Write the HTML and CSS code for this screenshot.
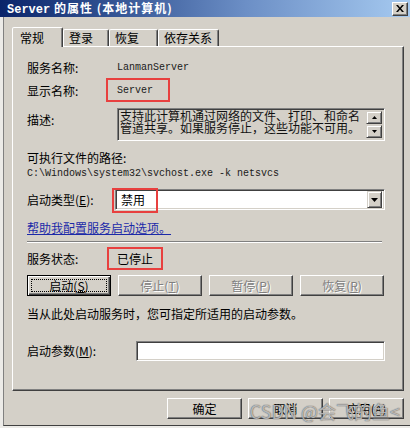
FILE: index.html
```html
<!DOCTYPE html>
<html>
<head>
<meta charset="utf-8">
<title>Server 的属性</title>
<link rel="stylesheet" href="styles.css">
</head>
<body>
<div class="window">
  <div class="titlebar">
    <span class="title"><span class="tmono">Server</span> 的属性 (本地计算机)</span>
    <span class="close"><svg width="8" height="7" viewBox="0 0 8 7"><path d="M0 0h2l2 2.5L6 0h2L5 3.5 8 7H6L4 4.5 2 7H0l3-3.5z" fill="#000"/></svg></span>
  </div>
  <div class="frame">
    <div class="tabs">
      <div class="tab active">常规</div>
      <div class="tab t2">登录</div>
      <div class="tab t3">恢复</div>
      <div class="tab t4">依存关系</div>
    </div>
    <div class="panel">
      <div class="row r-name"><span class="label">服务名称:</span><span class="val mono">LanmanServer</span></div>
      <div class="row r-disp"><span class="label">显示名称:</span><span class="val mono">Server<i class="mark mark-disp"></i></span></div>
      <div class="r-desc">
        <span class="label label-top">描述:</span>
        <div class="desc">
          <div class="desc-text">支持此计算机通过网络的文件、打印、和命名<br>管道共享。如果服务停止，这些功能不可用。</div>
          <div class="vscroll">
            <span class="sbtn"><svg width="5" height="3" viewBox="0 0 5 3"><path d="M2.5 0L5 3H0z" fill="#000"/></svg></span>
            <span class="sbtn"><svg width="5" height="3" viewBox="0 0 5 3"><path d="M0 0h5L2.5 3z" fill="#000"/></svg></span>
          </div>
        </div>
      </div>
      <div class="r-pathlabel">可执行文件的路径:</div>
      <div class="r-path mono">C:\Windows\system32\svchost.exe -k netsvcs</div>
      <div class="row r-type">
        <span class="label label-type">启动类型(<u>E</u>):</span>
        <div class="combo">
          <span class="combo-text">禁用</span>
          <span class="combo-btn"><svg width="7" height="4" viewBox="0 0 7 4"><path d="M0 0h7L3.5 4z" fill="#000"/></svg></span>
          <i class="mark mark-type"></i>
        </div>
      </div>
      <div class="r-link"><span class="link">帮助我配置服务启动选项。</span></div>
      <div class="sep"></div>
      <div class="row r-status"><span class="label">服务状态:</span><span class="val status">已停止<i class="mark mark-status"></i></span></div>
      <div class="btnrow">
        <span class="btn default"><span class="focus">启动(<u>S</u>)</span></span>
        <span class="btn disabled">停止(<u>T</u>)</span>
        <span class="btn disabled">暂停(<u>P</u>)</span>
        <span class="btn disabled">恢复(<u>R</u>)</span>
      </div>
      <div class="hint">当从此处启动服务时，您可指定所适用的启动参数。</div>
      <div class="row r-param"><span class="label label-param">启动参数(<u>M</u>):</span><div class="input"></div></div>
    </div>
    <div class="footer">
      <span class="btn fbtn">确定</span>
      <span class="btn fbtn">取消</span>
      <span class="btn fbtn">应用(<u>A</u>)</span>
    </div>
  </div>
  <div class="watermark">CSDN @会飞的鱼&lt;</div>
</div>
</body>
</html>
```

FILE: styles.css
```css
* { box-sizing: border-box; }
html, body { margin: 0; padding: 0; }
body {
  width: 410px;
  height: 428px;
  overflow: hidden;
  background: #ffffff;
  font-family: "Noto Sans CJK SC", "Noto Sans", sans-serif;
  font-size: 12px;
  color: #000;
}
.window {
  position: relative;
  width: 410px;
  height: 428px;
  background: #ecebe8;
}
.titlebar {
  height: 17px;
  display: flex;
  align-items: center;
  justify-content: space-between;
  padding: 0 2px 0 7px;
  background: linear-gradient(to right, #0a246a 0%, #2f4f8f 25%, #6c8fc6 60%, #a6caf0 100%);
}
.title {
  color: #fff;
  font-weight: bold;
  font-size: 12px;
  line-height: 17px;
  letter-spacing: 1px;
  white-space: nowrap;
}
.tmono { font-family: "Liberation Mono", monospace; font-size: 12px; letter-spacing: 0; }
.close {
  width: 16px;
  height: 14px;
  background: #d4d0c8;
  border: 1px solid;
  border-color: #fff #404040 #404040 #fff;
  box-shadow: inset -1px -1px #808080;
  display: flex;
  align-items: center;
  justify-content: center;
}
.frame {
  position: relative;
  margin-left: 3px;
  height: 409px;
  border-left: 1px solid #808080;
  border-bottom: 1px solid #404040;
  background: #d4d0c8;
  padding: 10px 6px 0 8px;
}
.tabs {
  position: relative;
  z-index: 1;
  display: flex;
  align-items: flex-end;
  height: 19px;
}
.tab {
  height: 17px;
  border: 1px solid;
  border-bottom: none;
  border-color: #fff #404040 transparent #fff;
  box-shadow: inset -1px 0 #808080;
  border-radius: 2px 2px 0 0;
  display: flex;
  align-items: center;
  padding-left: 5px;
  line-height: 14px;
  background: #d4d0c8;
}
.tab.active { width: 51px; height: 20px; margin-bottom: -1px; padding-left: 7px; padding-top: 1px; }
.t2 { width: 46px; }
.t3 { width: 49px; }
.t4 { width: 61px; }
.panel {
  height: 345px;
  border: 1px solid;
  border-color: #fff #404040 #404040 #fff;
  box-shadow: inset -1px -1px #808080;
  padding: 0 0 0 14px;
}
.row { display: flex; align-items: center; }
.label { width: 90px; flex: none; line-height: 14px; white-space: nowrap; }
.val { position: relative; display: inline-block; line-height: 14px; }
.mono { font-family: "Liberation Mono", monospace; font-size: 10px; color: #1a1a1a; }
.mark {
  position: absolute;
  display: block;
  border: 2px solid #e8403f;
}
.r-name { height: 20px; margin-top: 11px; }
.r-disp { height: 20px; margin-top: 3px; }
.mark-disp { left: -11px; top: -6px; width: 64px; height: 24px; }
.r-desc { display: flex; margin-top: 7px; }
.label-top { padding-top: 5px; }
.desc {
  width: 268px;
  height: 33px;
  display: flex;
  border: 1px solid;
  border-color: #808080 #fff #fff #808080;
  box-shadow: inset 1px 1px #404040, inset -1px -1px #d4d0c8;
  padding: 1px 2px 2px 2px;
}
.desc-text { flex: 1; line-height: 12px; font-size: 12px; white-space: nowrap; color: #111; }
.vscroll { width: 16px; display: flex; flex-direction: column; padding-top: 1px; }
.sbtn {
  width: 16px;
  height: 14px;
  background: #d4d0c8;
  border: 1px solid;
  border-color: #d4d0c8 #404040 #404040 #d4d0c8;
  box-shadow: inset 1px 1px #fff, inset -1px -1px #808080;
  display: flex;
  align-items: center;
  justify-content: center;
}
.sbtn + .sbtn { margin-top: 1px; }
.r-pathlabel { margin-top: 10px; line-height: 14px; }
.r-path { margin-top: 2px; line-height: 14px; }
.r-type { height: 21px; margin-top: 8px; }
.label-type { width: 88px; }
.combo {
  position: relative;
  width: 270px;
  height: 21px;
  background: #fff;
  border: 1px solid;
  border-color: #808080 #fff #fff #808080;
  box-shadow: inset 1px 1px #404040, inset -1px -1px #d4d0c8;
  display: flex;
  align-items: center;
  justify-content: space-between;
  padding: 2px 2px 2px 5px;
}
.combo-text { line-height: 14px; }
.combo-btn {
  width: 15px;
  height: 17px;
  background: #d4d0c8;
  border: 1px solid;
  border-color: #d4d0c8 #404040 #404040 #d4d0c8;
  box-shadow: inset 1px 1px #fff, inset -1px -1px #808080;
  display: flex;
  align-items: center;
  justify-content: center;
}
.mark-type { left: -4px; top: -2px; width: 46px; height: 25px; }
.r-link { margin-top: 11px; line-height: 14px; }
.link { color: #1c2aa8; text-decoration: underline; }
.sep {
  width: 355px;
  height: 2px;
  margin-top: 6px;
  border-top: 1px solid #808080;
  border-bottom: 1px solid #fff;
}
.r-status { height: 20px; margin-top: 6px; }
.status { font-size: 12px; }
.mark-status { left: -10px; top: -5px; width: 56px; height: 23px; }
.btnrow { display: flex; gap: 7px; margin-top: 6px; }
.btn {
  width: 84px;
  height: 21px;
  background: #d4d0c8;
  border: 1px solid;
  border-color: #fff #404040 #404040 #fff;
  box-shadow: inset -1px -1px #808080;
  display: flex;
  align-items: center;
  justify-content: center;
  line-height: 14px;
  white-space: nowrap;
}
.btn.default {
  border: 1px solid #000;
  box-shadow: inset 1px 1px #fff, inset -1px -1px #404040, inset -2px -2px #808080;
  padding: 3px;
}
.focus {
  flex: 1;
  align-self: stretch;
  border: 1px dotted #000;
  display: flex;
  align-items: center;
  justify-content: center;
}
.btn.disabled { color: #808080; text-shadow: 1px 1px 0 #fff; }
.hint { margin-top: 11px; line-height: 14px; }
.r-param { height: 20px; margin-top: 20px; }
.label-param { width: 109px; }
.input {
  width: 249px;
  height: 20px;
  background: #fff;
  border: 1px solid;
  border-color: #808080 #fff #fff #808080;
  box-shadow: inset 1px 1px #404040, inset -1px -1px #d4d0c8;
}
.footer {
  display: flex;
  justify-content: flex-end;
  gap: 6px;
  margin-top: 7px;
}
.fbtn { width: 75px; }
.watermark {
  position: absolute;
  right: 10px;
  bottom: 6px;
  font-family: "Noto Sans CJK SC", "Noto Sans", sans-serif;
  font-size: 18px;
  line-height: 22px;
  color: rgba(250, 250, 250, 0.6);
  text-shadow: 0 0 1px rgba(70, 70, 70, 0.9), 0 0 1px rgba(70, 70, 70, 0.6);
  white-space: nowrap;
}
```
